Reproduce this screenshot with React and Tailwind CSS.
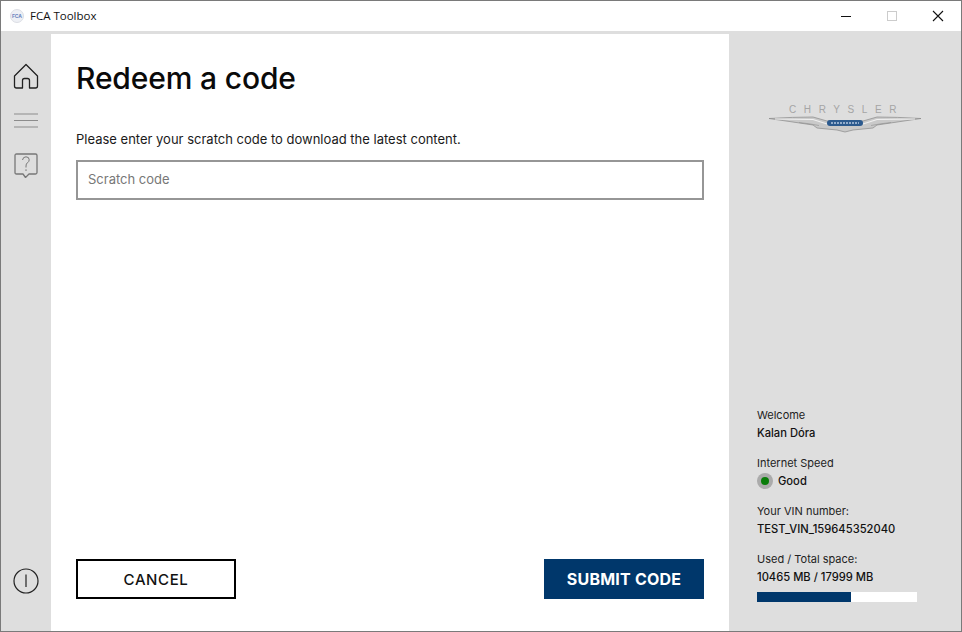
import React from "react";

const Home = () => (
  <svg width="26" height="26" viewBox="0 0 26 26" fill="none" stroke="#222" strokeWidth="1.3" strokeLinejoin="round">
    <path d="M13 1.5 L1.5 13 V23 Q1.5 25 3.5 25 H9.5 V17.5 Q9.5 15.5 11.5 15.5 H14.5 Q16.5 15.5 16.5 17.5 V25 H22.5 Q24.5 25 24.5 23 V13 Z" />
  </svg>
);
const Menu = () => (
  <svg width="24" height="15" viewBox="0 0 24 15" stroke="#8c8c8c" strokeWidth="1.2">
    <path d="M0 1H24M0 7.5H24M0 14H24" />
  </svg>
);
const Help = () => (
  <svg width="24" height="25" viewBox="0 0 24 25" fill="none" stroke="#777" strokeWidth="1.3" strokeLinejoin="round">
    <path d="M2.5 1H21.5Q23 1 23 2.5V19.5Q23 21 21.5 21H15L11.5 24.5L9 21H2.5Q1 21 1 19.5V2.5Q1 1 2.5 1Z" />
    <path d="M8.5 7Q9 3.8 12 3.8Q15.2 3.8 15.2 6.8Q15.2 8.6 13.4 9.8Q12 10.8 12 13V14.5M12 16.3V18" strokeWidth="1" />
  </svg>
);
const Info = () => (
  <svg width="26" height="26" viewBox="0 0 26 26" fill="none" stroke="#222" strokeWidth="1.2">
    <circle cx="13" cy="13" r="12" />
    <path d="M13 6.5V19" />
  </svg>
);
const Logo = () => (
  <svg width="154" height="18" viewBox="0 0 154 18">
    <path d="M0 3.5 Q25 2 44 2 L58 6 H94 L108 2 Q127 2 152 3.5 Q128 7 108 10 L104 13 L84 15 L76 17 L68 15 L48 13 L44 10 Q24 7 0 3.5Z" fill="#c9c9c9" stroke="#8a8a8a" strokeWidth="0.7" />
    <path d="M6 4 Q26 4 44 4.5 L58 9 M146 4 Q126 4 108 4.5 L94 9" stroke="#f0f0f0" strokeWidth="1.1" fill="none" />
    <path d="M30 7.5 Q40 8.5 50 10.5 M122 7.5 Q112 8.5 102 10.5" stroke="#8f8f8f" strokeWidth="0.6" fill="none" />
    <rect x="58" y="5" width="36" height="6" rx="3" fill="#2c5a8e" />
    <path d="M62 8H90" stroke="#b4c8e0" strokeWidth="1.6" strokeDasharray="2 1" />
  </svg>
);

const label = "text-[11px] leading-[18px] text-[#222]";
const value = "text-[11.2px] leading-[18px] font-medium text-[#111]";

export default function App() {
  return (
    <div className="w-[962px] h-[632px] border border-[#7a7a7a] flex flex-col bg-white overflow-hidden font-['Inter','Liberation_Sans',sans-serif]">
      <header className="h-[30px] shrink-0 flex items-center bg-white">
        <div className="w-[14px] h-[14px] ml-[9px] mr-[6px] rounded-full bg-[#eef0f5] border border-[#dcdee4] flex items-center justify-center text-[5px] leading-none font-bold text-[#6d87c0]">
          FCA
        </div>
        <span className="text-[11.5px] text-[#111] font-['Open_Sans','Noto_Sans',sans-serif]">FCA Toolbox</span>
        <div className="ml-auto flex items-center">
          <div className="w-[46px] h-[30px] flex items-center justify-center">
            <div className="w-[10px] h-px bg-[#111]" />
          </div>
          <div className="w-[46px] h-[30px] flex items-center justify-center">
            <div className="w-[10px] h-[10px] border border-[#cccccc]" />
          </div>
          <div className="w-[46px] h-[30px] flex items-center justify-center">
            <svg width="12" height="12" viewBox="0 0 12 12" stroke="#111" strokeWidth="1.1"><path d="M1 1L11 11M11 1L1 11" /></svg>
          </div>
        </div>
      </header>
      <div className="flex-1 flex min-h-0 bg-[#dedede] pt-[3px]">
        <nav className="w-[50px] shrink-0 flex flex-col items-center pt-[29px] pb-[37px] -mt-[3px]">
          <div className="mt-[3px] h-[26px]"><Home /></div>
          <div className="mt-[24px] h-[15px]"><Menu /></div>
          <div className="mt-[25px] h-[25px]"><Help /></div>
          <div className="mt-auto"><Info /></div>
        </nav>
        <main className="w-[678px] shrink-0 bg-white flex flex-col px-[25px] pt-[26px] pb-[32px]">
          <h1 className="text-[30px] leading-[36px] font-medium tracking-[-0.15px] text-[#0a0a0a]">Redeem a code</h1>
          <p className="mt-[33px] text-[13px] leading-[20px] text-[#1a1a1a]">Please enter your scratch code to download the latest content.</p>
          <div className="mt-[11px] h-[40px] w-[628px] border-2 border-[#969696] flex items-center pl-[10px] pb-[1px] text-[13px] text-[#777]">Scratch code</div>
          <div className="mt-auto flex justify-between items-start">
            <button className="w-[160px] h-[40px] border-2 border-black pt-[3px] text-[15px] font-medium tracking-[0.6px] text-[#111]">CANCEL</button>
            <button className="w-[160px] h-[40px] bg-[#00376b] text-white text-[16px] font-bold tracking-[0.2px]">SUBMIT CODE</button>
          </div>
        </main>
        <aside className="flex-1 flex flex-col pl-[28px] pb-[29px]">
          <div className="mt-[71px] ml-[12px]">
            <div className="text-[10px] leading-[10px] tracking-[7.6px] text-[#a5a5a5] pl-[20px] font-['Liberation_Sans',sans-serif]">CHRYSLER</div>
            <div><Logo /></div>
          </div>
          <div className="mt-auto flex flex-col">
            <div className={label}>Welcome</div>
            <div className={value}>Kalan Dóra</div>
            <div className={`${label} mt-[12px]`}>Internet Speed</div>
            <div className="flex items-center gap-[5px] h-[18px]">
              <div className="w-[16px] h-[16px] rounded-full bg-[#ababab] flex items-center justify-center">
                <div className="w-[8px] h-[8px] rounded-full bg-[#0a7d0a]" />
              </div>
              <span className={value}>Good</span>
            </div>
            <div className={`${label} mt-[12px]`}>Your VIN number:</div>
            <div className={value}>TEST_VIN_159645352040</div>
            <div className={`${label} mt-[12px]`}>Used / Total space:</div>
            <div className={value}>10465 MB / 17999 MB</div>
            <div className="mt-[6px] w-[160px] h-[10px] bg-white">
              <div className="h-full w-[94px] bg-[#00376b]" />
            </div>
          </div>
        </aside>
      </div>
    </div>
  );
}
